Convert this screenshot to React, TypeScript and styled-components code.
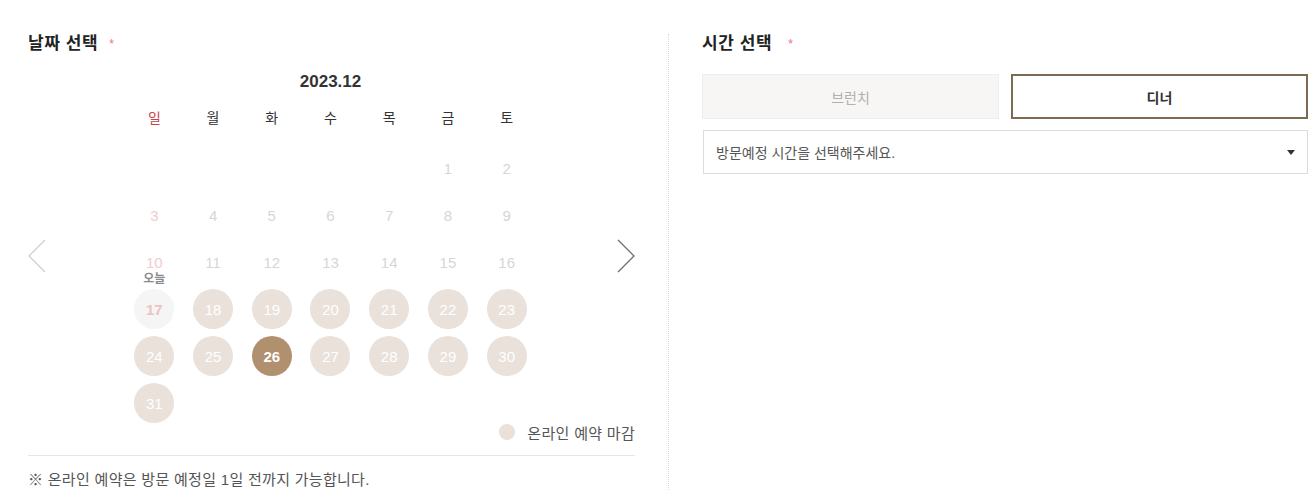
import React, { useState } from 'react';
import styled, { createGlobalStyle } from 'styled-components';

const GlobalStyle = createGlobalStyle`
  body {
    margin: 0;
    background: #fff;
    font-family: "Liberation Sans", "Noto Sans CJK KR", sans-serif;
    color: #333;
  }
`;

const Page = styled.div`
  display: flex;
  padding: 34px 7px 10px 28px;
`;

const DateSection = styled.section`
  width: 607px;
`;

const Divider = styled.div`
  margin: 0 33px;
  border-left: 1px dotted #d8d8d8;
`;

const TimeSection = styled.section`
  flex: 1;
`;

const Title = styled.h3`
  margin: 0;
  font-size: 17px;
  line-height: 20px;
  letter-spacing: 0.6px;
  font-weight: 700;
  color: #222;
  display: flex;
  align-items: center;
`;

const Required = styled.span<{ gap: number }>`
  margin-left: ${({ gap }) => gap}px;
  color: #ec6f85;
  font-size: 12px;
  font-weight: 400;
`;

const CalendarRow = styled.div`
  display: flex;
  align-items: flex-start;
  justify-content: space-between;
  margin-top: 17px;
`;

const Arrow = styled.button<{ disabled?: boolean }>`
  margin-top: 168px;
  width: 18px;
  height: 34px;
  padding: 0;
  border: none;
  background: none;
  cursor: pointer;
  color: ${({ disabled }) => (disabled ? '#cfcfcf' : '#6f6f6f')};
  display: flex;
  align-items: center;
  justify-content: center;
`;

const Calendar = styled.div`
  width: 411px;
  margin-left: -2px;
`;

const MonthLabel = styled.div`
  text-align: center;
  font-size: 17px;
  line-height: 20px;
  font-weight: 700;
  color: #333;
  padding-top: 1px;
`;

const WeekHeader = styled.div`
  display: grid;
  grid-template-columns: repeat(7, 1fr);
  margin-top: 16px;
`;

const WeekDay = styled.div<{ sunday?: boolean }>`
  text-align: center;
  font-size: 14px;
  line-height: 20px;
  color: ${({ sunday }) => (sunday ? '#c8434a' : '#333')};
`;

const DateGrid = styled.div`
  display: grid;
  grid-template-columns: repeat(7, 1fr);
  row-gap: 7px;
  margin-top: 20px;
`;

const Cell = styled.div`
  position: relative;
  height: 40px;
  display: flex;
  justify-content: center;
`;

type DayState = 'disabled' | 'today' | 'open' | 'selected';

const Day = styled.button<{ state: DayState; sunday?: boolean }>`
  width: 40px;
  height: 40px;
  padding: 0;
  border: none;
  border-radius: 50%;
  font-family: "Liberation Sans", sans-serif;
  font-size: 15px;
  cursor: ${({ state }) => (state === 'disabled' ? 'default' : 'pointer')};
  font-weight: ${({ state }) => (state === 'selected' || state === 'today' ? 700 : 400)};
  background: ${({ state }) => {
    if (state === 'selected') return '#b0906e';
    if (state === 'open') return '#e9e1da';
    if (state === 'today') return '#f5f5f5';
    return 'transparent';
  }};
  color: ${({ state, sunday }) => {
    if (state === 'selected' || state === 'open') return '#fff';
    if (state === 'today') return '#ebc3c3';
    return sunday ? '#f1cccc' : '#d6d6d6';
  }};
`;

const TodayTag = styled.span`
  position: absolute;
  top: -17px;
  left: 0;
  right: 0;
  text-align: center;
  font-size: 12px;
  line-height: 14px;
  font-weight: 700;
  color: #8a8a8a;
`;

const Legend = styled.div`
  display: flex;
  justify-content: flex-end;
  align-items: center;
  gap: 12px;
  height: 18px;
  font-size: 15px;
  letter-spacing: 0.3px;
  color: #555;
`;

const LegendDot = styled.span`
  width: 16px;
  height: 16px;
  border-radius: 50%;
  background: #e9e1da;
`;

const Rule = styled.hr`
  margin: 14px 0 0;
  border: none;
  border-top: 1px solid #e6e6e6;
`;

const Notice = styled.p`
  margin: 14px 0 0;
  font-size: 15px;
  letter-spacing: 0.3px;
  line-height: 20px;
  color: #555;
`;

const MealTabs = styled.div`
  display: grid;
  grid-template-columns: 1fr 1fr;
  gap: 12px;
  margin-top: 20px;
`;

const MealTab = styled.button<{ active?: boolean }>`
  height: 45px;
  font-family: "Liberation Sans", "Noto Sans CJK KR", sans-serif;
  font-size: 14px;
  cursor: pointer;
  background: ${({ active }) => (active ? '#fff' : '#f7f6f4')};
  border: ${({ active }) => (active ? '2px solid #7d6a52' : '1px solid #eeeeee')};
  color: ${({ active }) => (active ? '#333' : '#b0b0b0')};
  font-weight: ${({ active }) => (active ? 700 : 400)};
`;

const Select = styled.div`
  margin: 11px 0 0 1px;
  height: 42px;
  border: 1px solid #dcdcdc;
  display: flex;
  align-items: center;
  justify-content: space-between;
  padding: 0 12px;
  font-size: 14px;
  color: #555;
  cursor: pointer;
`;

const Caret = styled.span`
  width: 0;
  height: 0;
  border-left: 4px solid transparent;
  border-right: 4px solid transparent;
  border-top: 5px solid #333;
`;

const WEEKDAYS = ['일', '월', '화', '수', '목', '금', '토'];
const TODAY = 17;

const Chevron = ({ dir }: { dir: 'left' | 'right' }) => (
  <svg width="18" height="34" viewBox="0 0 18 34" fill="none">
    <path
      d={dir === 'left' ? 'M17 1 L1 17 L17 33' : 'M1 1 L17 17 L1 33'}
      stroke="currentColor"
      strokeWidth="1.3"
    />
  </svg>
);

const App: React.FC = () => {
  const [selected, setSelected] = useState(26);
  const [meal, setMeal] = useState<'brunch' | 'dinner'>('dinner');

  // December 2023 starts on Friday
  const cells: (number | null)[] = [...Array(5).fill(null)];
  for (let d = 1; d <= 31; d++) cells.push(d);

  const stateOf = (d: number): DayState => {
    if (d === selected) return 'selected';
    if (d === TODAY) return 'today';
    if (d < TODAY) return 'disabled';
    return 'open';
  };

  return (
    <>
      <GlobalStyle />
      <Page>
        <DateSection>
          <Title>
            날짜 선택<Required gap={11}>*</Required>
          </Title>
          <CalendarRow>
            <Arrow disabled>
              <Chevron dir="left" />
            </Arrow>
            <Calendar>
              <MonthLabel>2023.12</MonthLabel>
              <WeekHeader>
                {WEEKDAYS.map((w, i) => (
                  <WeekDay key={w} sunday={i === 0}>
                    {w}
                  </WeekDay>
                ))}
              </WeekHeader>
              <DateGrid>
                {cells.map((d, i) => (
                  <Cell key={i}>
                    {d !== null && (
                      <>
                        {d === TODAY && <TodayTag>오늘</TodayTag>}
                        <Day
                          state={stateOf(d)}
                          sunday={i % 7 === 0}
                          onClick={() => d > TODAY && setSelected(d)}
                        >
                          {d}
                        </Day>
                      </>
                    )}
                  </Cell>
                ))}
              </DateGrid>
            </Calendar>
            <Arrow>
              <Chevron dir="right" />
            </Arrow>
          </CalendarRow>
          <Legend>
            <LegendDot />
            온라인 예약 마감
          </Legend>
          <Rule />
          <Notice>※ 온라인 예약은 방문 예정일 1일 전까지 가능합니다.</Notice>
        </DateSection>
        <Divider />
        <TimeSection>
          <Title>
            시간 선택<Required gap={16}>*</Required>
          </Title>
          <MealTabs>
            <MealTab active={meal === 'brunch'} onClick={() => setMeal('brunch')}>
              브런치
            </MealTab>
            <MealTab active={meal === 'dinner'} onClick={() => setMeal('dinner')}>
              디너
            </MealTab>
          </MealTabs>
          <Select>
            방문예정 시간을 선택해주세요.
            <Caret />
          </Select>
        </TimeSection>
      </Page>
    </>
  );
};

export default App;
